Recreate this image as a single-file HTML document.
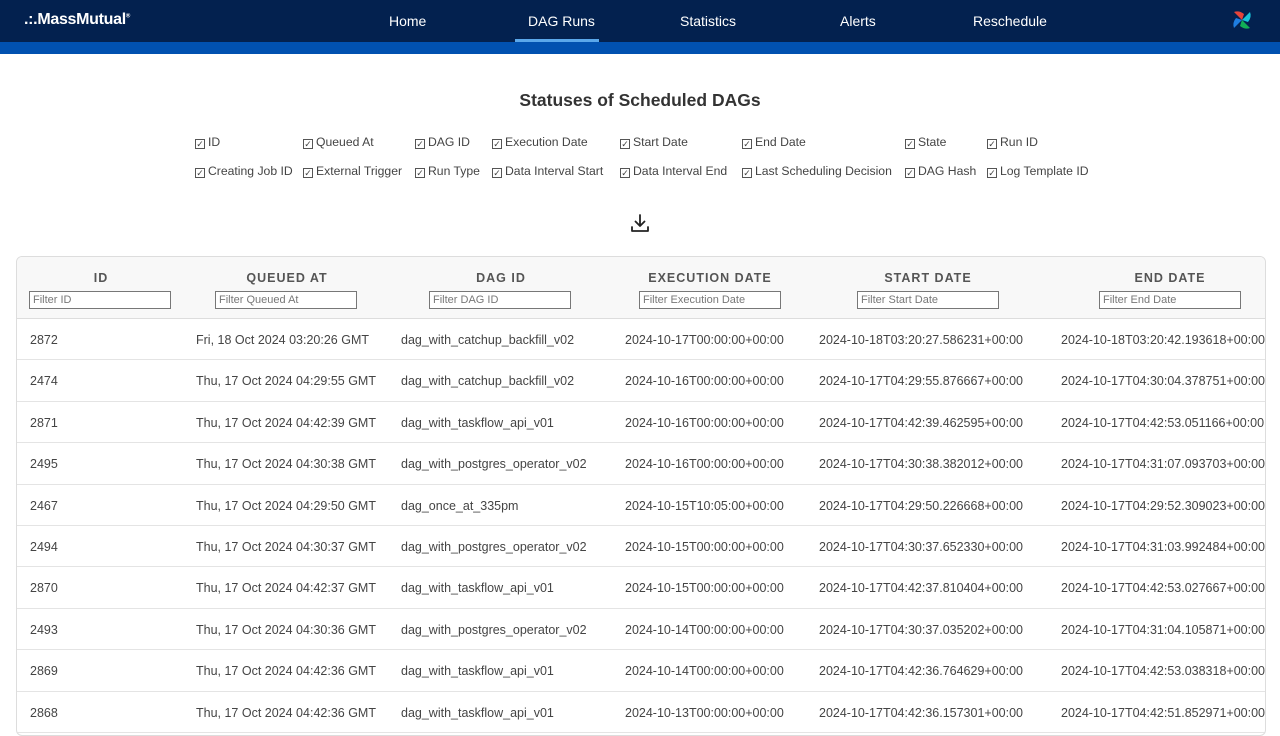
<!DOCTYPE html>
<html><head><meta charset="utf-8"><style>
*{box-sizing:border-box;margin:0;padding:0}
body{width:1280px;height:719px;overflow:hidden;background:#fff;font-family:"Liberation Sans",sans-serif;color:#333;position:relative}
.hdr{position:absolute;left:0;top:0;width:1280px;height:42px;background:#03214f}
.bar{position:absolute;left:0;top:42px;width:1280px;height:12px;background:#0151b0}
.nav{position:absolute;top:13px;color:#fff;font-size:14px}
.ab{position:absolute}
.title{position:absolute;top:90px;width:1280px;text-align:center;font-weight:bold;font-size:17.5px;color:#333}
.cb{position:absolute;font-size:12.2px;color:#444;white-space:nowrap}
.cb i{display:inline-block;width:10px;height:10px;border:1px solid #555;margin-right:3px;vertical-align:-1px;font-style:normal;font-size:9px;line-height:8px;text-align:center}
.card{position:absolute;left:16px;top:256px;width:1250px;height:480px;border:1px solid #ddd;border-radius:6px;overflow:hidden;background:#fff}
.th{position:absolute;left:0;top:0;width:1250px;height:62px;background:#f8f8f8;border-bottom:1px solid #ddd}
.h{position:absolute;top:14px;font-size:12.5px;font-weight:bold;letter-spacing:1px;color:#555;transform:translateX(-50%);white-space:nowrap}
.f{position:absolute;top:34px;width:142px;height:18px;border:1px solid #777;background:#fff;font-size:11px;color:#777;padding-left:3px;line-height:16px}
.row{position:absolute;left:0;width:1250px;height:41.4px;border-bottom:1px solid #e4e4e4;font-size:12.5px;color:#444}
.row span{position:absolute;top:14px;white-space:nowrap}
</style></head><body>
<div class="hdr"></div><div class="bar"></div>
<div class="ab" style="left:24px;top:11px;color:#fff;font-weight:bold;font-size:16px;letter-spacing:-0.3px">.:.MassMutual<sup style="font-size:6px">®</sup></div>
<div class="nav" style="left:389px">Home</div>
<div class="nav" style="left:528px">DAG Runs</div>
<div class="ab" style="left:515px;top:39px;width:84px;height:3px;background:#5aa7ea"></div>
<div class="nav" style="left:680px">Statistics</div>
<div class="nav" style="left:840px">Alerts</div>
<div class="nav" style="left:973px">Reschedule</div>
<svg class="ab" style="left:1230px;top:8px" width="24" height="24" viewBox="0 0 24 24">
<path d="M12 12 L4 4 Q9 2 14 6Z" fill="#e5443a"/><path d="M12 12 L20 4 Q22 9 18 14Z" fill="#17c4d8"/><path d="M12 12 L20 20 Q15 22 10 18Z" fill="#11b056"/><path d="M12 12 L4 20 Q2 15 6 10Z" fill="#1e7de0"/></svg>
<div class="title">Statuses of Scheduled DAGs</div>
<div class="cb" style="left:195px;top:135px"><i>✓</i>ID</div>
<div class="cb" style="left:303px;top:135px"><i>✓</i>Queued At</div>
<div class="cb" style="left:415px;top:135px"><i>✓</i>DAG ID</div>
<div class="cb" style="left:492px;top:135px"><i>✓</i>Execution Date</div>
<div class="cb" style="left:620px;top:135px"><i>✓</i>Start Date</div>
<div class="cb" style="left:742px;top:135px"><i>✓</i>End Date</div>
<div class="cb" style="left:905px;top:135px"><i>✓</i>State</div>
<div class="cb" style="left:987px;top:135px"><i>✓</i>Run ID</div>
<div class="cb" style="left:195px;top:164px"><i>✓</i>Creating Job ID</div>
<div class="cb" style="left:303px;top:164px"><i>✓</i>External Trigger</div>
<div class="cb" style="left:415px;top:164px"><i>✓</i>Run Type</div>
<div class="cb" style="left:492px;top:164px"><i>✓</i>Data Interval Start</div>
<div class="cb" style="left:620px;top:164px"><i>✓</i>Data Interval End</div>
<div class="cb" style="left:742px;top:164px"><i>✓</i>Last Scheduling Decision</div>
<div class="cb" style="left:905px;top:164px"><i>✓</i>DAG Hash</div>
<div class="cb" style="left:987px;top:164px"><i>✓</i>Log Template ID</div>
<svg class="ab" style="left:630px;top:213px" width="20" height="20" viewBox="0 0 20 20" fill="none" stroke="#222" stroke-width="1.8" stroke-linecap="round" stroke-linejoin="round"><path d="M10 2v11M5.5 8.5 10 13l4.5-4.5M2 14v4h16v-4"/></svg>
<div class="card">
<div class="th">
<div class="h" style="left:84px">ID</div><div class="h" style="left:270px">QUEUED AT</div><div class="h" style="left:484px">DAG ID</div><div class="h" style="left:693px">EXECUTION DATE</div><div class="h" style="left:911px">START DATE</div><div class="h" style="left:1153px">END DATE</div>
<div class="f" style="left:12px">Filter ID</div><div class="f" style="left:198px">Filter Queued At</div><div class="f" style="left:412px">Filter DAG ID</div><div class="f" style="left:622px">Filter Execution Date</div><div class="f" style="left:840px">Filter Start Date</div><div class="f" style="left:1082px">Filter End Date</div>
</div>
<div class="row" style="top:62px"><span style="left:13px">2872</span><span style="left:179px">Fri, 18 Oct 2024 03:20:26 GMT</span><span style="left:384px">dag_with_catchup_backfill_v02</span><span style="left:608px">2024-10-17T00:00:00+00:00</span><span style="left:802px">2024-10-18T03:20:27.586231+00:00</span><span style="left:1044px">2024-10-18T03:20:42.193618+00:00</span></div>
<div class="row" style="top:103.4px"><span style="left:13px">2474</span><span style="left:179px">Thu, 17 Oct 2024 04:29:55 GMT</span><span style="left:384px">dag_with_catchup_backfill_v02</span><span style="left:608px">2024-10-16T00:00:00+00:00</span><span style="left:802px">2024-10-17T04:29:55.876667+00:00</span><span style="left:1044px">2024-10-17T04:30:04.378751+00:00</span></div>
<div class="row" style="top:144.8px"><span style="left:13px">2871</span><span style="left:179px">Thu, 17 Oct 2024 04:42:39 GMT</span><span style="left:384px">dag_with_taskflow_api_v01</span><span style="left:608px">2024-10-16T00:00:00+00:00</span><span style="left:802px">2024-10-17T04:42:39.462595+00:00</span><span style="left:1044px">2024-10-17T04:42:53.051166+00:00</span></div>
<div class="row" style="top:186.2px"><span style="left:13px">2495</span><span style="left:179px">Thu, 17 Oct 2024 04:30:38 GMT</span><span style="left:384px">dag_with_postgres_operator_v02</span><span style="left:608px">2024-10-16T00:00:00+00:00</span><span style="left:802px">2024-10-17T04:30:38.382012+00:00</span><span style="left:1044px">2024-10-17T04:31:07.093703+00:00</span></div>
<div class="row" style="top:227.6px"><span style="left:13px">2467</span><span style="left:179px">Thu, 17 Oct 2024 04:29:50 GMT</span><span style="left:384px">dag_once_at_335pm</span><span style="left:608px">2024-10-15T10:05:00+00:00</span><span style="left:802px">2024-10-17T04:29:50.226668+00:00</span><span style="left:1044px">2024-10-17T04:29:52.309023+00:00</span></div>
<div class="row" style="top:269px"><span style="left:13px">2494</span><span style="left:179px">Thu, 17 Oct 2024 04:30:37 GMT</span><span style="left:384px">dag_with_postgres_operator_v02</span><span style="left:608px">2024-10-15T00:00:00+00:00</span><span style="left:802px">2024-10-17T04:30:37.652330+00:00</span><span style="left:1044px">2024-10-17T04:31:03.992484+00:00</span></div>
<div class="row" style="top:310.4px"><span style="left:13px">2870</span><span style="left:179px">Thu, 17 Oct 2024 04:42:37 GMT</span><span style="left:384px">dag_with_taskflow_api_v01</span><span style="left:608px">2024-10-15T00:00:00+00:00</span><span style="left:802px">2024-10-17T04:42:37.810404+00:00</span><span style="left:1044px">2024-10-17T04:42:53.027667+00:00</span></div>
<div class="row" style="top:351.8px"><span style="left:13px">2493</span><span style="left:179px">Thu, 17 Oct 2024 04:30:36 GMT</span><span style="left:384px">dag_with_postgres_operator_v02</span><span style="left:608px">2024-10-14T00:00:00+00:00</span><span style="left:802px">2024-10-17T04:30:37.035202+00:00</span><span style="left:1044px">2024-10-17T04:31:04.105871+00:00</span></div>
<div class="row" style="top:393.2px"><span style="left:13px">2869</span><span style="left:179px">Thu, 17 Oct 2024 04:42:36 GMT</span><span style="left:384px">dag_with_taskflow_api_v01</span><span style="left:608px">2024-10-14T00:00:00+00:00</span><span style="left:802px">2024-10-17T04:42:36.764629+00:00</span><span style="left:1044px">2024-10-17T04:42:53.038318+00:00</span></div>
<div class="row" style="top:434.6px"><span style="left:13px">2868</span><span style="left:179px">Thu, 17 Oct 2024 04:42:36 GMT</span><span style="left:384px">dag_with_taskflow_api_v01</span><span style="left:608px">2024-10-13T00:00:00+00:00</span><span style="left:802px">2024-10-17T04:42:36.157301+00:00</span><span style="left:1044px">2024-10-17T04:42:51.852971+00:00</span></div>
</div>
</body></html>
